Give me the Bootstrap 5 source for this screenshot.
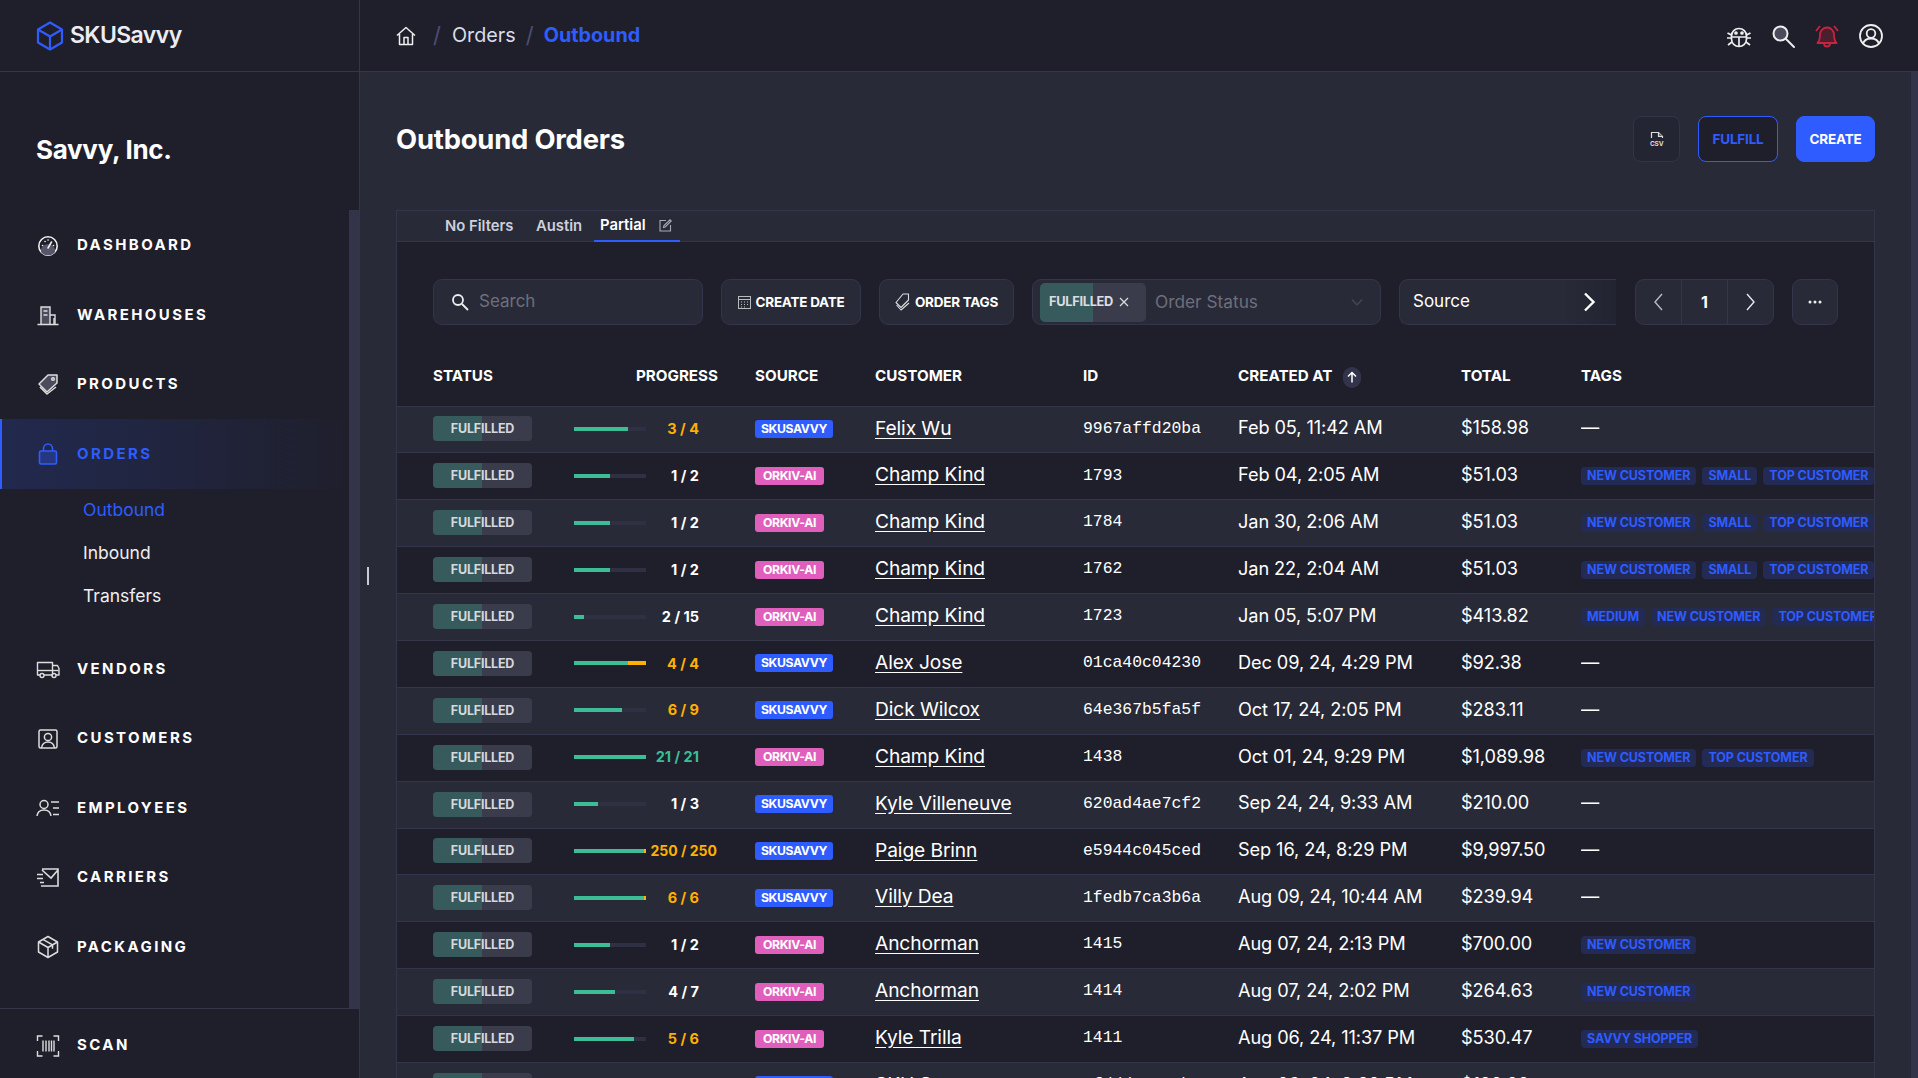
<!DOCTYPE html>
<html lang="en"><head><meta charset="utf-8"><title>Outbound Orders</title>
<link href="https://cdn.jsdelivr.net/npm/bootstrap@5.3.0/dist/css/bootstrap.min.css" rel="stylesheet">
<style>
:root{--ink:#1f1f2c;--pane:#282a38;--line:#34344a;--blue:#2e5cff;--fg:#f4f4f8;}
html,body{height:100%;overflow:hidden;background:var(--pane);color:var(--fg);font-family:Inter,"Open Sans",sans-serif;}
.shell{height:1078px;width:1918px;position:relative;}
.sidebar{width:360px;background:var(--ink);border-right:1px solid var(--line);flex:none;}
.brand-bar{height:72px;border-bottom:1px solid var(--line);padding-left:36px;gap:6px;}
.brand-name{font-size:23px;font-weight:600;letter-spacing:-.6px;color:#ececf2;}
.org-name{height:138px;padding:16px 0 0 36px;font-size:26px;font-weight:700;flex:none;letter-spacing:-.3px;color:#fff;}
.side-scroll{flex:1;border-right:10px solid #33334a;position:relative;min-height:0;padding-top:1px;}
.side-link{height:69.4px;padding-left:36px;display:flex;align-items:center;font-size:15px;font-weight:700;letter-spacing:2.4px;color:#fff;text-decoration:none;text-transform:uppercase;}
.side-link svg{width:24px;height:24px;margin-right:17px;flex:none;}
.side-link.on{color:var(--blue);border-left:2px solid var(--blue);padding-left:34px;background:linear-gradient(90deg,rgba(46,92,255,.16),rgba(46,92,255,.1) 40%,rgba(46,92,255,0));}
.sub-menu{padding:0 0 18px 83px;margin-top:-1px;}
.sub-menu a{display:block;height:43px;line-height:43px;color:#eee;text-decoration:none;font-size:17.5px;}
.sub-menu a.on{color:var(--blue);}
.scan-row{height:70px;border-top:1px solid var(--line);flex:none;}
.scan-row .side-link{padding-top:4px;}
.topbar{height:72px;background:var(--ink);border-bottom:1px solid var(--line);padding:0 34px 0 36px;flex:none;}
.crumb{font-size:19.8px;color:#d9dde8;}
.crumb.on{color:var(--blue);font-weight:700;}
.slash{color:#4a4f70;font-size:22px;margin:0 10px 0 10px;}
.slash.first{margin:0 11px 0 17px;}
.top-ico{width:26px;height:26px;margin-left:18px;}
.main-pane{flex:1;min-width:0;border-right:7px solid #33334a;padding:0 36px;overflow:hidden;}
.head-row{height:138px;padding-bottom:4px;flex:none;}
.page-title{font-size:27.4px;font-weight:700;margin:0;letter-spacing:-.2px;color:#fff;}
.act{height:46px;border-radius:8px;font-size:13.5px;font-weight:700;padding:0;display:flex;align-items:center;justify-content:center;letter-spacing:-.2px;}
.act-csv{width:47px;background:#242532;border:1px solid #33344a;}
.act-ful{width:80px;background:var(--ink);border:1px solid var(--blue);color:var(--blue);margin-left:18px;}
.act-new{width:79px;background:var(--blue);border:1px solid var(--blue);color:#fff;margin-left:18px;}
.act-ful:hover,.act-new:hover{color:#fff;}
.sheet{background:var(--ink);border-top:1px solid var(--line);border-left:1px solid var(--line);border-right:1px solid var(--line);}
.tab-row{height:31px;background:var(--pane);border-bottom:1px solid var(--line);padding-left:48px;font-size:14.8px;font-weight:600;color:#ccd0dc;flex:none;}
.tab-x{flex:none;}
.tab-on{color:#fff;border-bottom:2px solid var(--blue);height:31px;width:86px;padding-left:6px;display:flex;align-items:center;gap:13px;}
.tool-row{height:120px;padding-left:36px;flex:none;}
.ctl{height:46px;background:var(--pane);border:1px solid var(--line);border-radius:9px;display:flex;align-items:center;flex:none;margin-right:18px;}
.ctl-search{width:270px;padding-left:17px;color:#6d6f7c;font-size:17px;gap:10px;}
.ctl-btn{justify-content:center;font-size:13.5px;font-weight:700;color:#fff;gap:5px;letter-spacing:-.25px;}
.ctl-status{width:349px;padding:0 0 0 7px;color:#6d6f7c;font-size:17.3px;}
.chip{width:106px;height:39px;border-radius:5px;background:linear-gradient(90deg,#375a5c 50%,#3a3c4c 50%);color:#dcdde2;font-size:12.8px;font-weight:700;display:flex;align-items:center;padding-left:9px;gap:6px;margin-right:9px;letter-spacing:-.3px;}
.ctl-source{width:217px;padding-left:13px;color:#fff;font-size:17px;border-right:0;border-radius:9px 0 0 9px;justify-content:space-between;padding-right:20px;margin-right:19px;background:linear-gradient(90deg,var(--pane) 75%,#232431);}
.pager{width:139px;overflow:hidden;}
.pager span{flex:1;height:100%;display:flex;align-items:center;justify-content:center;font-weight:700;color:#fff;font-size:16px;}
.pager span+span{border-left:1px solid var(--line);}
.grid-wrap{overflow:hidden;flex:1;}
table.orders{table-layout:fixed;width:1477px;margin:0;--bs-table-bg:transparent;--bs-table-color:#fff;color:#fff;border-collapse:collapse;}
.orders th{height:44px;padding:0 0 14px;font-size:15.2px;font-weight:700;color:#fff;border-bottom:1px solid var(--line);vertical-align:middle;background:var(--ink);letter-spacing:0;}
.orders td{height:46.9px;padding:0 0 3px;vertical-align:middle;border:0;border-bottom:1px solid var(--line);font-size:18.2px;white-space:nowrap;overflow:hidden;letter-spacing:-.1px;background:var(--ink);color:#fff;}
.orders td.flat{padding-bottom:1px;}
.orders tbody tr:nth-child(odd) td{background:var(--pane);}
.orders .c1{padding-left:36px;}
.orders th.pr{text-align:right;padding-right:37px;}
.st{display:block;width:99px;height:25px;line-height:25px;text-align:center;border-radius:4px;background:linear-gradient(90deg,#375a5c 50%,#3a3c4c 50%);font-size:12.5px;font-weight:700;color:#d6d8dc;letter-spacing:-.2px;}
.prog{display:flex;align-items:center;width:125px;justify-content:space-between;}
.trk{display:flex;width:72px;height:4px;background:#2f3044;overflow:hidden;flex:none;}
.trk i{display:block;height:4px;background:#3cbd96;}
.trk b{display:block;height:4px;background:#ffb000;}
.ct{font-size:14.5px;font-weight:700;color:#fff;letter-spacing:0;white-space:nowrap;}
.ct.warn{color:#ffb000;}.ct.ok{color:#3cbd96;}
.ct.wide{margin-right:-18px;font-size:14px;}
.srcb{display:block;height:18px;line-height:18px;border-radius:3px;font-size:12.2px;font-weight:700;color:#fff;letter-spacing:-.35px;text-align:center;}
.srcb.sk{background:var(--blue);width:78px;}
.srcb.or{background:#e05fbd;width:69px;}
.who{color:#fff;text-decoration:underline;text-underline-offset:3px;font-size:19.2px;}
.who:hover{color:#fff;}
.orders td.idt{font-family:"Liberation Mono",monospace;font-size:16.4px;letter-spacing:0;}
.tg{display:inline-block;height:18px;line-height:18px;border-radius:4px;background:#232b55;color:#2e5cff;padding:0 6px;font-size:12.5px;font-weight:700;margin-right:6px;letter-spacing:-.1px;vertical-align:middle;}
.sort-dot{display:inline-flex;width:18px;height:21px;border-radius:9px;background:#33344c;align-items:center;justify-content:center;margin-left:11px;vertical-align:middle;}
.grip{position:absolute;left:367px;top:567px;width:2px;height:18px;background:#c8cad6;}
</style></head><body>
<div class="shell d-flex">
 <aside class="sidebar d-flex flex-column">
  <div class="brand-bar d-flex align-items-center">
   <svg width="28" height="30" viewBox="0 0 28 30" fill="none" stroke="#2e5cff" stroke-width="2.2" stroke-linejoin="round"><path d="M14 1.500 26 8.500v13L14 28.500 2 21.500v-13z"/><path d="M2 8.500 14 15.500 26 8.500M14 15.500v13"/></svg>
   <span class="brand-name">SKUSavvy</span>
  </div>
  <div class="org-name d-flex align-items-center">Savvy, Inc.</div>
  <nav class="side-scroll">
   <a class="side-link" href="#"><svg viewBox="0 0 24 24" fill="none" stroke="#eee" stroke-width="1.6"><circle cx="12" cy="12" r="9.2"/><path d="M5 15a7.500 7.500 0 0 1 14 0v3a9 9 0 0 1-14 0z" fill="#55566a" stroke="none"/><path d="M12 14l3.500-6M6.500 11.500h.1M9 7.500h.1M12 6h.1M17.500 11.500h.1" stroke-linecap="round"/></svg>Dashboard</a>
   <a class="side-link" href="#"><svg viewBox="0 0 24 24" fill="none" stroke="#ddd" stroke-width="1.4"><path d="M5 21V4h9v17" fill="#4a4b5c"/><path d="M7.500 8h4M7.500 12h4M1.500 21.500h21M14 12h5v9"/><path d="M18 15v6"/></svg>Warehouses</a>
   <a class="side-link" href="#"><svg viewBox="0 0 24 24" fill="none" stroke="#ddd" stroke-width="1.5" stroke-linejoin="round"><path d="M12 3h9v8L11 20l-8-8z" fill="#4a4b5c"/><path d="M4 15l7 7 9-7"/><circle cx="17" cy="7" r="1.3"/></svg>Products</a>
   <a class="side-link on" href="#"><svg viewBox="0 0 24 24" fill="rgba(46,92,255,.3)" stroke="#2e5cff" stroke-width="1.6" stroke-linejoin="round"><rect x="3.500" y="9" width="17" height="13" rx="1.500"/><path d="M7.500 9V6.500a4.500 4.500 0 0 1 9 0V9" fill="none"/></svg>Orders</a>
   <div class="sub-menu"><a class="on" href="#">Outbound</a><a href="#">Inbound</a><a href="#">Transfers</a></div>
   <a class="side-link" href="#"><svg viewBox="0 0 24 24" fill="none" stroke="#ddd" stroke-width="1.4" stroke-linejoin="round"><path d="M4.500 18H1.500V5.500h15V18H8M16.500 8.500h5l1.500 3V18h-3M13 18h3.500"/><circle cx="6" cy="18.500" r="2"/><circle cx="18" cy="18.500" r="2"/><path d="M1.500 13.500h21"/></svg>Vendors</a>
   <a class="side-link" href="#"><svg viewBox="0 0 24 24" fill="none" stroke="#ddd" stroke-width="1.5"><rect x="3" y="3" width="18" height="18" rx="1.500"/><circle cx="12" cy="10" r="3.600"/><path d="M5.500 21c.6-4 3-6 6.500-6s5.900 2 6.500 6"/></svg>Customers</a>
   <a class="side-link" href="#"><svg viewBox="0 0 24 24" fill="none" stroke="#ddd" stroke-width="1.5"><circle cx="8" cy="8.500" r="4"/><path d="M1 20c.5-4 3-6 7-6s6.500 2 7 6M15 6h8M17 12h6M17 18.500h6"/></svg>Employees</a>
   <a class="side-link" href="#"><svg viewBox="0 0 24 24" fill="none" stroke="#ddd" stroke-width="1.6"><path d="M6 4h16v17H5M6 5l9 8 7-8M1 9.500h6M1 13.500h6M4 17.500h4"/></svg>Carriers</a>
   <a class="side-link" href="#"><svg viewBox="0 0 24 24" fill="none" stroke="#ddd" stroke-width="1.5" stroke-linejoin="round"><path d="M12 1.500 21.500 7v10L12 22.500 2.500 17V7z"/><path d="M2.500 7 12 12.500 21.500 7M12 12.500v10M7 4.300l9.500 5.500v4"/></svg>Packaging</a>
  </nav>
  <div class="scan-row"><a class="side-link h-100" href="#"><svg viewBox="0 0 24 24" fill="none" stroke="#ddd" stroke-width="1.4"><path d="M1.500 7V2h5M17.500 2h5v5M22.500 17v5h-5M6.500 22h-5v-5M7 6.500v11M10 6.500v11M13 6.500v11M15.500 6.500v11M18 6.500v11"/></svg>Scan</a></div>
 </aside>
 <div class="flex-grow-1 d-flex flex-column" style="min-width:0">
  <header class="topbar d-flex align-items-center">
   <svg width="20" height="20" viewBox="0 0 20 20" fill="none" stroke="#eee" stroke-width="1.500" stroke-linejoin="round"><path d="M1 9.500 10 1.500l9 8M3.500 8v10.500h13V8M8 18.500v-7h4v7"/></svg>
   <span class="slash first">/</span><span class="crumb">Orders</span><span class="slash">/</span><span class="crumb on">Outbound</span>
   <div class="ms-auto d-flex align-items-center">
    <svg class="top-ico" viewBox="0 0 26 26" fill="none" stroke="#eee" stroke-width="1.700"><path d="M5.500 13a7.500 7.500 0 0 1 15 0v3a7.500 7.500 0 0 1-15 0z"/><path d="M5.500 14h15M13 14v9M1.500 10l4 2M24.500 10l-4 2M1 15h4M25 15h-4M2 22l4-3M24 22l-4-3"/><circle cx="10" cy="10" r="1" fill="#eee"/><circle cx="16" cy="10" r="1" fill="#eee"/></svg>
    <svg class="top-ico" viewBox="0 0 26 26" fill="none" stroke="#eee" stroke-width="2"><circle cx="10.500" cy="10.500" r="7" fill="#4a4b5c"/><path d="M16 16l8 8" stroke-linecap="round"/></svg>
    <svg class="top-ico" viewBox="0 0 26 26" fill="#4a1f2e" stroke="#c8233f" stroke-width="1.800" stroke-linejoin="round"><path d="M13 4.500a7 7 0 0 0-7 7c0 4-1 7-2.500 8.500h19C21 18.500 20 15.500 20 11.500a7 7 0 0 0-7-7z"/><path d="M10 20.500a3 3 0 0 0 6 0M2 8l4-5M24 8l-4-5" fill="none"/></svg>
    <svg class="top-ico" viewBox="0 0 26 26" fill="none" stroke="#eee" stroke-width="1.800"><circle cx="13" cy="13" r="11"/><circle cx="13" cy="10.500" r="4.300"/><path d="M5 21c1-4 4-5.500 8-5.500s7 1.500 8 5.500"/></svg>
   </div>
  </header>
  <main class="main-pane d-flex flex-column">
   <div class="head-row d-flex align-items-center">
    <h1 class="page-title">Outbound Orders</h1>
    <div class="ms-auto d-flex">
     <button class="btn act act-csv"><svg width="14" height="16" viewBox="0 0 14 16" fill="none" stroke="#ddd" stroke-width="1.200"><path d="M1.500 7V1.500h7l4 4V7"/><path d="M8.500 1.500v4h4" fill="#666"/><text x="0" y="14.500" font-size="6.500" font-weight="700" fill="#ddd" stroke="none" font-family="Inter">CSV</text></svg></button>
     <button class="btn act act-ful">FULFILL</button>
     <button class="btn act act-new">CREATE</button>
    </div>
   </div>
   <section class="sheet d-flex flex-column flex-grow-1" style="min-height:0">
    <div class="tab-row d-flex align-items-center">
     <span class="tab-x" style="width:91px">No Filters</span><span class="tab-x" style="width:58px">Austin</span>
     <span class="tab-on">Partial<svg width="13" height="13" viewBox="0 0 13 13" fill="none" stroke="#a8aab6" stroke-width="1.100"><path d="M7 1.500H1v10.500h10.500V6"/><path d="M4.500 8.500l.5-2L11 .8l1.200 1.200-6 5.900z"/></svg></span>
    </div>
    <div class="tool-row d-flex align-items-center">
     <div class="ctl ctl-search"><svg width="18" height="18" viewBox="0 0 18 18" fill="none" stroke="#eee" stroke-width="1.800"><circle cx="7" cy="7" r="5"/><path d="M11 11l6 6"/></svg>Search</div>
     <div class="ctl ctl-btn" style="width:140px"><svg width="13" height="14" viewBox="0 0 13 14" fill="none" stroke="#bbb"><rect x=".5" y="1.500" width="12" height="12"/><path d="M.5 4.500h12M3 7h1M6 7h1M9 7h1M3 9.500h1M6 9.500h1M9 9.500h1M3 12h1M6 12h1"/></svg>CREATE DATE</div>
     <div class="ctl ctl-btn" style="width:135px"><svg width="15" height="18" viewBox="0 0 15 18" fill="none" stroke="#ddd" stroke-width="1.100" stroke-linejoin="round"><path d="M8 1h5.500v6L6 14.500 1 9.500z"/><path d="M1.500 12 6 17l8-7"/></svg>ORDER TAGS</div>
     <div class="ctl ctl-status"><span class="chip">FULFILLED <svg width="10" height="10" viewBox="0 0 10 10" stroke="#ddd" stroke-width="1.200"><path d="M1 1l8 8M9 1l-8 8"/></svg></span>Order Status<svg class="ms-auto me-3" width="14" height="9" viewBox="0 0 14 9" fill="none" stroke="#444658" stroke-width="1.500"><path d="M2 1.500 7 7l5-5.500"/></svg></div>
     <div class="ctl ctl-source">Source<svg width="13" height="20" viewBox="0 0 13 20" fill="none" stroke="#fff" stroke-width="2.400"><path d="M2 1.500 10.500 10 2 18.500"/></svg></div>
     <div class="ctl pager"><span><svg width="11" height="18" viewBox="0 0 11 18" fill="none" stroke="#b8bac6" stroke-width="1.400"><path d="M9 1 2 9l7 8"/></svg></span><span>1</span><span><svg width="11" height="18" viewBox="0 0 11 18" fill="none" stroke="#e8e8ee" stroke-width="1.400"><path d="M2 1l7 8-7 8"/></svg></span></div>
     <div class="ctl justify-content-center" style="width:46px"><svg width="14" height="4" viewBox="0 0 14 4" fill="#eee"><circle cx="2" cy="2" r="1.500"/><circle cx="7" cy="2" r="1.500"/><circle cx="12" cy="2" r="1.500"/></svg></div>
    </div>
    <div class="grid-wrap">
    <table class="table orders" id="ot">
     <colgroup><col style="width:177px"><col style="width:181px"><col style="width:120px"><col style="width:208px"><col style="width:155px"><col style="width:223px"><col style="width:120px"><col style="width:293px"></colgroup>
     <thead><tr><th class="c1">STATUS</th><th class="pr">PROGRESS</th><th>SOURCE</th><th>CUSTOMER</th><th>ID</th><th>CREATED AT<span class="sort-dot"><svg width="10" height="12" viewBox="0 0 10 12" fill="none" stroke="#fff" stroke-width="1.500"><path d="M5 11.500V1.500M1 5.500l4-4 4 4"/></svg></span></th><th>TOTAL</th><th>TAGS</th></tr></thead>
     <tbody></tbody>
    </table>
    </div>
   </section>
  </main>
 </div>
 <span class="grip"></span>
</div>
<script>
var N='NEW CUSTOMER',S='SMALL',T='TOP CUSTOMER',M='MEDIUM',V='SAVVY SHOPPER';
var R=[
[75,0,'3 / 4','warn','SKUSAVVY','Felix Wu','9967affd20ba','Feb 05, 11:42 AM','$158.98',[]],
[50,0,'1 / 2','','ORKIV-AI','Champ Kind','1793','Feb 04, 2:05 AM','$51.03',[N,S,T]],
[50,0,'1 / 2','','ORKIV-AI','Champ Kind','1784','Jan 30, 2:06 AM','$51.03',[N,S,T]],
[50,0,'1 / 2','','ORKIV-AI','Champ Kind','1762','Jan 22, 2:04 AM','$51.03',[N,S,T]],
[14,0,'2 / 15','','ORKIV-AI','Champ Kind','1723','Jan 05, 5:07 PM','$413.82',[M,N,T]],
[75,25,'4 / 4','warn','SKUSAVVY','Alex Jose','01ca40c04230','Dec 09, 24, 4:29 PM','$92.38',[]],
[67,0,'6 / 9','warn','SKUSAVVY','Dick Wilcox','64e367b5fa5f','Oct 17, 24, 2:05 PM','$283.11',[]],
[100,0,'21 / 21','ok','ORKIV-AI','Champ Kind','1438','Oct 01, 24, 9:29 PM','$1,089.98',[N,T]],
[33,0,'1 / 3','','SKUSAVVY','Kyle Villeneuve','620ad4ae7cf2','Sep 24, 24, 9:33 AM','$210.00',[]],
[97,3,'250 / 250','warn wide','SKUSAVVY','Paige Brinn','e5944c045ced','Sep 16, 24, 8:29 PM','$9,997.50',[]],
[97,3,'6 / 6','warn','SKUSAVVY','Villy Dea','1fedb7ca3b6a','Aug 09, 24, 10:44 AM','$239.94',[]],
[50,0,'1 / 2','','ORKIV-AI','Anchorman','1415','Aug 07, 24, 2:13 PM','$700.00',[N]],
[57,0,'4 / 7','','ORKIV-AI','Anchorman','1414','Aug 07, 24, 2:02 PM','$264.63',[N]],
[83,0,'5 / 6','warn','ORKIV-AI','Kyle Trilla','1411','Aug 06, 24, 11:37 PM','$530.47',[V]],
[50,0,'1 / 2','warn','SKUSAVVY','SKU Savvy','5fdddca1a8b6','Aug 06, 24, 9:32 PM','$120.00',[]]
];
document.querySelector('#ot tbody').innerHTML=R.map(function(r){
 var src=r[4]=='SKUSAVVY'?'sk':'or';
 var tags=r[9].length?r[9].map(function(t){return '<span class="tg">'+t+'</span>'}).join(''):'—';
 return '<tr><td class="c1 flat"><span class="st">FULFILLED</span></td><td class="flat"><div class="prog"><span class="trk"><i style="width:'+r[0]+'%"></i><b style="width:'+r[1]+'%"></b></span><span class="ct '+r[3]+'">'+r[2]+'</span></div></td><td class="flat"><span class="srcb '+src+'">'+r[4]+'</span></td><td><a class="who" href="#">'+r[5]+'</a></td><td class="idt flat">'+r[6]+'</td><td>'+r[7]+'</td><td>'+r[8]+'</td><td>'+tags+'</td></tr>';
}).join('');
</script>
<script src="https://cdn.jsdelivr.net/npm/bootstrap@5.3.0/dist/js/bootstrap.bundle.min.js"></script>
</body></html>
